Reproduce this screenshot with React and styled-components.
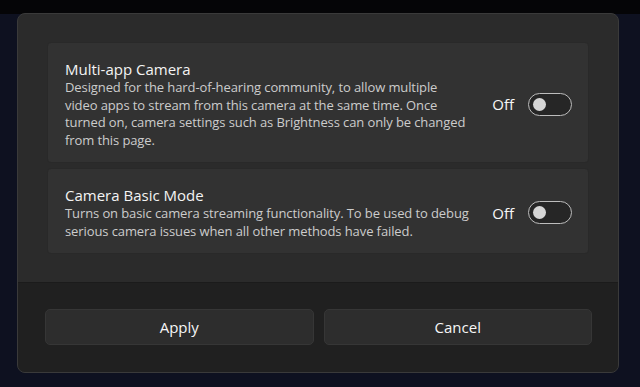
import React, { useState } from "react";
import styled, { createGlobalStyle } from "styled-components";

const GlobalStyle = createGlobalStyle`
  html, body {
    margin: 0;
    padding: 0;
    background: #0e1120;
  }
  body {
    font-family: "Open Sans", "Noto Sans", sans-serif;
    -webkit-font-smoothing: antialiased;
  }
`;

// line breaks kept as in the original dialog
const settings = [
  {
    id: "multi",
    title: "Multi-app Camera",
    text:
      "Designed for the hard-of-hearing community, to allow multiple\nvideo apps to stream from this camera at the same time. Once\nturned on, camera settings such as Brightness can only be changed\nfrom this page.",
  },
  {
    id: "basic",
    title: "Camera Basic Mode",
    text:
      "Turns on basic camera streaming functionality. To be used to debug\nserious camera issues when all other methods have failed.",
  },
];

const App = () => {
  const [values, setValues] = useState({ multi: false, basic: false });

  const onToggle = (id) => {
    setValues((prev) => ({ ...prev, [id]: !prev[id] }));
  };

  return (
    <Page>
      <GlobalStyle />
      <Dialog>
        <Body>
          {settings.map((item) => (
            <Card key={item.id}>
              <Info>
                <Title>{item.title}</Title>
                <Text>{item.text}</Text>
              </Info>
              <ToggleArea>
                <State>{values[item.id] ? "On" : "Off"}</State>
                <Switch $on={values[item.id]} onClick={() => onToggle(item.id)}>
                  <Knob $on={values[item.id]} />
                </Switch>
              </ToggleArea>
            </Card>
          ))}
        </Body>
        <Footer>
          <Button>Apply</Button>
          <Button>Cancel</Button>
        </Footer>
      </Dialog>
    </Page>
  );
};

export default App;

const Page = styled.div`
  width: 640px;
  height: 387px;
  box-sizing: border-box;
  padding: 13px 21px 0 17px;
  background: linear-gradient(to bottom, #050507 0, #050507 14px, #0e1120 14px);
  overflow: hidden;
`;

const Dialog = styled.div`
  width: 602px;
  height: 360px;
  display: flex;
  flex-direction: column;
  border-radius: 8px;
  border: 1px solid #3a3a3a;
  box-sizing: border-box;
  overflow: hidden;
  background: #2b2b2b;
`;

const Body = styled.div`
  flex: 1;
  display: flex;
  flex-direction: column;
  gap: 5px;
  padding: 28px 29px 0 29px;
`;

const Card = styled.div`
  display: flex;
  align-items: center;
  gap: 8px;
  padding: 16px 16px 13px 17px;
  background: #323232;
  border: 1px solid #292929;
  border-radius: 4px;
`;

const Info = styled.div`
  flex: 1;
  min-width: 0;
  display: flex;
  flex-direction: column;
`;

const Title = styled.div`
  font-size: 15px;
  line-height: 20px;
  color: #f4f4f4;
`;

const Text = styled.div`
  font-size: 13px;
  line-height: 17.5px;
  letter-spacing: -0.1px;
  color: #cccccc;
  white-space: pre-line;
`;

const ToggleArea = styled.div`
  display: flex;
  align-items: center;
  gap: 14px;
`;

const State = styled.span`
  font-size: 15px;
  color: #f8f8f8;
`;

const Switch = styled.div`
  width: 44px;
  height: 23px;
  box-sizing: border-box;
  border: 1px solid #bdbdbd;
  border-radius: 12px;
  display: flex;
  align-items: center;
  justify-content: ${(p) => (p.$on ? "flex-end" : "flex-start")};
  padding: 0 4px;
  background: ${(p) => (p.$on ? "#4cc2ff" : "#262626")};
  cursor: pointer;
`;

const Knob = styled.div`
  width: 13px;
  height: 13px;
  border-radius: 50%;
  background: ${(p) => (p.$on ? "#1a1a1a" : "#d6d6d6")};
`;

const Footer = styled.div`
  height: 90px;
  box-sizing: border-box;
  display: flex;
  gap: 10px;
  padding: 26px 26px 0 27px;
  background: #202020;
  border-top: 1px solid #1b1b1b;
`;

const Button = styled.button`
  flex: 1;
  height: 36px;
  border-radius: 5px;
  border: 1px solid #363636;
  background: #2d2d2d;
  color: #f6f6f6;
  font-family: "Open Sans", "Noto Sans", sans-serif;
  font-size: 15px;
  cursor: pointer;
  &:hover {
    background: #323232;
  }
`;
